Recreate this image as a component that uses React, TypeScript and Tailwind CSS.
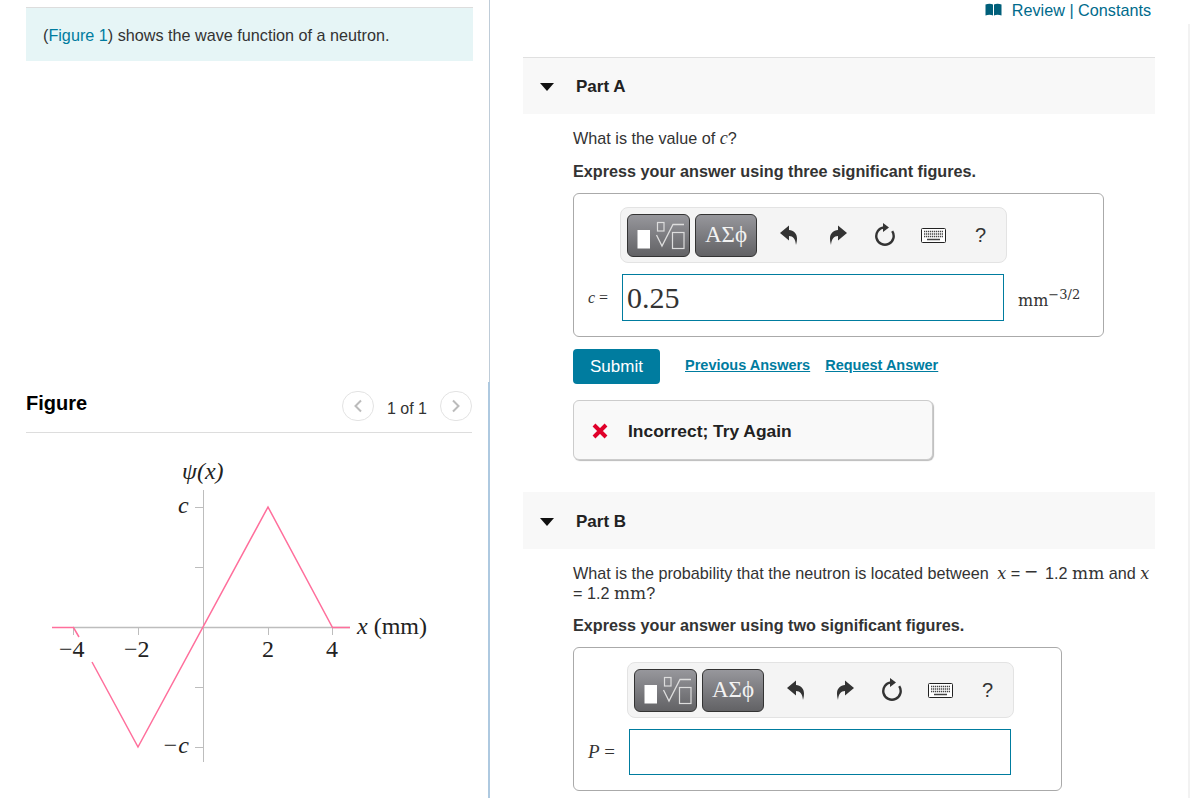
const sans = "font-['Liberation_Sans',Arial,sans-serif]";
const serif = "font-['Liberation_Serif','Times_New_Roman',serif]";
const mathSerif = "font-['DejaVu_Serif',serif]";

const UndoIcon = ({ flip = false }: { flip?: boolean }) => (
  <svg width="18" height="20" viewBox="0 0 18 20" className={flip ? "-scale-x-100" : ""}>
    <path d="M0 8 L9 0.5 V5 C15 5.500 19 10 16 20 C15.500 14 13 11 9 11 V15.500 Z" fill="#333" />
  </svg>
);

const ResetIcon = () => (
  <svg width="21" height="24" viewBox="0 0 21 24">
    <path d="M17.200 8.200 A8.700 8.700 0 1 1 9 4.400" fill="none" stroke="#333" strokeWidth="2.400" />
    <path d="M8 0 L14 4.500 L8 9 Z" fill="#333" />
  </svg>
);

const KeyboardIcon = () => (
  <svg width="25" height="15" viewBox="0 0 25 15">
    <rect x="0.5" y="0.5" width="24" height="14" rx="1" fill="#fff" stroke="#222" />
    <path d="M3 3.500h19M3 6h19M3 8.500h19" stroke="#444" strokeWidth="1.300" strokeDasharray="1.300 0.700" />
    <path d="M6 11.500h13" stroke="#444" strokeWidth="1.500" />
  </svg>
);

const Toolbar = () => (
  <div className="flex h-[56px] w-[387px] items-center rounded-lg border border-[#e3e3e3] bg-[#f4f4f4] pl-[6px]">
    <div className="h-[43px] w-[63px] rounded-md border border-[#333] bg-gradient-to-b from-[#97979c] to-[#626265]">
      <svg width="61" height="41" viewBox="0 0 61 41">
        <rect x="9.500" y="15" width="12.500" height="18.500" fill="#fff" />
        <rect x="29.500" y="7.500" width="6.500" height="8.500" fill="none" stroke="#ddd" strokeWidth="1.200" />
        <path d="M28.500 20 L34 31 L45 9.500 H56" fill="none" stroke="#ddd" strokeWidth="1.300" />
        <rect x="44.500" y="17.500" width="11.500" height="16" fill="none" stroke="#ddd" strokeWidth="1.200" />
      </svg>
    </div>
    <div className={`ml-[5px] flex h-[43px] w-[62px] items-center justify-center rounded-md border border-[#333] bg-gradient-to-b from-[#97979c] to-[#626265] text-[23px] text-[#f2f2f2] ${serif}`}>
      ΑΣϕ
    </div>
    <div className="ml-[23px] flex w-[18px] justify-center"><UndoIcon /></div>
    <div className="ml-[31px] flex w-[18px] justify-center"><UndoIcon flip /></div>
    <div className="ml-[28px] flex w-[21px] justify-center"><ResetIcon /></div>
    <div className="ml-[25px] flex w-[25px] justify-center"><KeyboardIcon /></div>
    <div className={`ml-[29px] text-[20px] text-[#333] ${sans}`}>?</div>
  </div>
);

const PartHeader = ({ label, border = false }: { label: string; border?: boolean }) => (
  <div className={`flex h-[57px] items-center bg-[#f8f8f8] pl-[17px] pt-[2px] ${border ? "border-t border-[#e0e0e0]" : ""}`}>
    <span className="h-0 w-0 border-x-[7px] border-t-[8px] border-x-transparent border-t-[#111]" />
    <span className="ml-[22px] text-[17px] font-bold text-[#222]">{label}</span>
  </div>
);

const Graph = () => (
  <svg width="440" height="340" viewBox="0 0 440 340" className="block">
    <g stroke="#bdbdbd" strokeWidth="1" fill="none">
      <path d="M203.500 40V312" />
      <path d="M73 177.500H350" strokeWidth="1.500" />
      <path d="M195 57.500h8M195 117.500h8M195 237.500h8M195 297.500h8" />
      <path d="M73.500 177v8M138.500 177v8M268.500 177v8M332.500 177v8" />
    </g>
    <path d="M52 177.500H73.500L79 187M92 212L138 297L268 57L332.500 177.500H350" fill="none" stroke="#ff6f9c" strokeWidth="1.500" />
    <g className={serif} fill="#222" fontSize="24">
      <text x="182" y="29" fontStyle="italic">ψ(x)</text>
      <text x="178" y="63" fontStyle="italic">c</text>
      <text x="162" y="303" fontStyle="italic">−c</text>
      <text x="59" y="207">−4</text>
      <text x="124" y="207">−2</text>
      <text x="262" y="207">2</text>
      <text x="326" y="207">4</text>
      <text x="357" y="184"><tspan fontStyle="italic">x</tspan> (mm)</text>
    </g>
  </svg>
);

const App = () => {
  return (
    <div className={`flex h-[798px] w-[1190px] overflow-hidden bg-white text-[16.2px] text-[#333] ${sans}`}>
      {/* left column */}
      <div className="flex h-full w-[490px] shrink-0 flex-col">
        <div className="h-[382px] border-r border-[#bfccd8] pl-[26px] pt-[7px]">
          <div className="flex h-[54px] w-[447px] items-center border-t border-[#dddddd] bg-[#e6f5f6] pl-[17px] pt-[2px]">
            <span>(<span className="text-[#007c9f]">Figure 1</span>) shows the wave function of a neutron.</span>
          </div>
        </div>
        <div className="flex-1 border-r-2 border-[#aec9e0] pl-[26px] pt-[5px]">
          <div className="flex h-[46px] w-[446px] items-start justify-between border-b border-[#ddd] pt-[4px]">
            <span className="mt-[-3px] text-[20px] font-bold text-black">Figure</span>
            <div className="flex items-center">
              <span className="flex h-[30px] w-[32px] items-center justify-center rounded-full border border-[#e3e3e3] text-[#bbb]">
                <svg width="10" height="14" viewBox="0 0 10 14"><path d="M8 1.500L2.500 7L8 12.500" fill="none" stroke="#bbb" strokeWidth="2" /></svg>
              </span>
              <span className="mx-[13px] mt-[6px] text-[16px]">1 of 1</span>
              <span className="flex h-[30px] w-[32px] items-center justify-center rounded-full border border-[#e3e3e3] text-[#bbb]">
                <svg width="10" height="14" viewBox="0 0 10 14"><path d="M2 1.500L7.500 7L2 12.500" fill="none" stroke="#bbb" strokeWidth="2" /></svg>
              </span>
            </div>
          </div>
          <div className="ml-[-26px] mt-[17px]">
            <Graph />
          </div>
        </div>
      </div>

      {/* right column */}
      <div className="flex flex-1">
        <div className="ml-[33px] w-[632px]">
          <div className="flex h-[57px] justify-end pr-[4px] leading-[20px] text-[#006b8c]">
            <svg width="17" height="13" viewBox="0 0 17 13" className="mr-[10px] mt-[3px]">
              <path d="M0.500 1.500C3 0.500 6 0.500 8 1.500V12.500C6 11.500 3 11.500 0.500 12.500ZM9 1.500C11 0.500 14 0.500 16.500 1.500V12.500C14 11.500 11 11.500 9 12.500Z" fill="#005f7a" />
            </svg>
            <span>Review | Constants</span>
          </div>
          <PartHeader label="Part A" border />
          <div className="pl-[50px]">
            <p className="mt-[14px] leading-[20px]">What is the value of <i className={`text-[18px] leading-none ${serif}`}>c</i>?</p>
            <p className="mt-[13px] font-bold leading-[20px]">Express your answer using three significant figures.</p>
            <div className="mt-[12px] h-[144px] w-[531px] rounded-md border border-[#aaa] pl-[46px] pt-[13px]">
              <Toolbar />
              <div className="mt-[11px] flex items-center">
                <span className={`ml-[-32px] w-[34px] text-[16px] ${serif}`}><i>c</i> =</span>
                <div className={`flex h-[47px] w-[382px] items-center border border-[#007c9f] pl-[4px] text-[30px] ${serif}`}>0.25</div>
                <span className={`ml-[14px] mt-[6px] whitespace-nowrap text-[16px] ${mathSerif}`}>mm<sup className="text-[13px]">−3/2</sup></span>
              </div>
            </div>
            <div className="mt-[12px] flex items-center">
              <button className="h-[35px] w-[87px] rounded-sm bg-[#007c9f] text-[17px] text-white">Submit</button>
              <a className="mb-[2px] ml-[25px] text-[14.500px] font-bold text-[#007c9f] underline">Previous Answers</a>
              <a className="mb-[2px] ml-[15px] text-[14.500px] font-bold text-[#007c9f] underline">Request Answer</a>
            </div>
            <div className="mt-[16px] flex h-[60px] w-[360px] items-center rounded-md border border-[#ccc] bg-[#f9f9f9] pl-[17px] pt-[2px] text-[17.400px] font-bold text-[#222] shadow-[1px_1px_1px_#bbb]">
              <svg width="18" height="18" viewBox="0 0 18 18">
                <path d="M3 3L15 15M15 3L3 15" stroke="#e0002a" strokeWidth="4" />
              </svg>
              <span className="ml-[19px]">Incorrect; Try Again</span>
            </div>
          </div>
          <div className="mt-[32px]">
            <PartHeader label="Part B" />
          </div>
          <div className="pl-[50px]">
            <p className="mt-[14px] w-[582px] leading-[20px]">
              What is the probability that the neutron is located between <i className={`ml-[4px] text-[16px] leading-none ${mathSerif}`}>x</i> = <span className="mr-[3px] text-[22px] leading-[0]">−</span> 1.2 <span className={`text-[17px] leading-none ${mathSerif}`}>mm</span> and <i className={`text-[16px] leading-none ${mathSerif}`}>x</i> = 1.2 <span className={`text-[17px] leading-none ${mathSerif}`}>mm</span>?
            </p>
            <p className="mt-[12px] font-bold leading-[20px]">Express your answer using two significant figures.</p>
            <div className="mt-[12px] h-[144px] w-[489px] rounded-md border border-[#aaa] pl-[53px] pt-[14px]">
              <Toolbar />
              <div className="mt-[11px] flex items-center">
                <span className={`ml-[-39px] w-[41px] text-[19px] ${serif}`}><i>P</i> =</span>
                <div className="h-[46px] w-[382px] border border-[#007c9f]" />
              </div>
            </div>
          </div>
        </div>
        <div className="ml-auto mt-[24px] h-full w-[2px] bg-[#f2f2f2]" />
      </div>
    </div>
  );
};

export default App;
